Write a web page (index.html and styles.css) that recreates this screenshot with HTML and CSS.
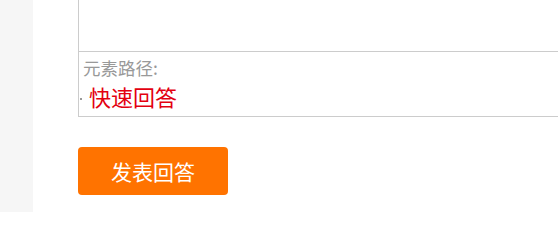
FILE: index.html
```html
<!DOCTYPE html>
<html lang="zh">
<head>
<meta charset="utf-8">
<link rel="stylesheet" href="styles.css">
</head>
<body>
<div class="page">
  <aside class="side"></aside>
  <main class="main">
    <div class="editor">
      <div class="editor-body"></div>
      <div class="editor-path">
        <div class="path-label">元素路径:</div>
        <div class="path-row"><span class="dot"></span><span class="path-item">快速回答</span></div>
      </div>
    </div>
    <button class="submit" type="button">发表回答</button>
  </main>
</div>
</body>
</html>
```

FILE: styles.css
```css
html, body {
  margin: 0;
  padding: 0;
  background: #ffffff;
  overflow: hidden;
}
body {
  font-family: "Noto Sans CJK SC", "Noto Sans", sans-serif;
}
.page {
  display: flex;
  width: 558px;
  height: 212px;
  overflow: hidden;
}
.side {
  width: 33px;
  flex: none;
  background: #f6f6f6;
}
.main {
  flex: none;
  padding-left: 45px;
  display: flex;
  flex-direction: column;
  align-items: flex-start;
}
.editor {
  width: 520px;
  border: 1px solid #cccccc;
  border-top: none;
}
.editor-body {
  height: 51px;
  border-bottom: 1px solid #cccccc;
}
.editor-path {
  height: 64px;
  padding: 5px 0 0 4px;
  box-sizing: border-box;
}
.path-label {
  font-size: 17.5px;
  line-height: 22px;
  color: #999999;
}
.path-row {
  display: flex;
  align-items: center;
  margin-left: -3px;
  margin-top: 1px;
}
.dot {
  width: 2px;
  height: 2px;
  background: #999999;
  margin-right: 7px;
  margin-top: 6px;
}
.path-item {
  font-size: 22px;
  line-height: 32px;
  color: #e30010;
}
.submit {
  margin-top: 30px;
  width: 150px;
  height: 48px;
  border: none;
  border-radius: 4px;
  background: #ff7300;
  color: #ffffff;
  font-family: "Noto Sans CJK SC", sans-serif;
  font-size: 21px;
  line-height: 48px;
  padding: 0;
}
```
